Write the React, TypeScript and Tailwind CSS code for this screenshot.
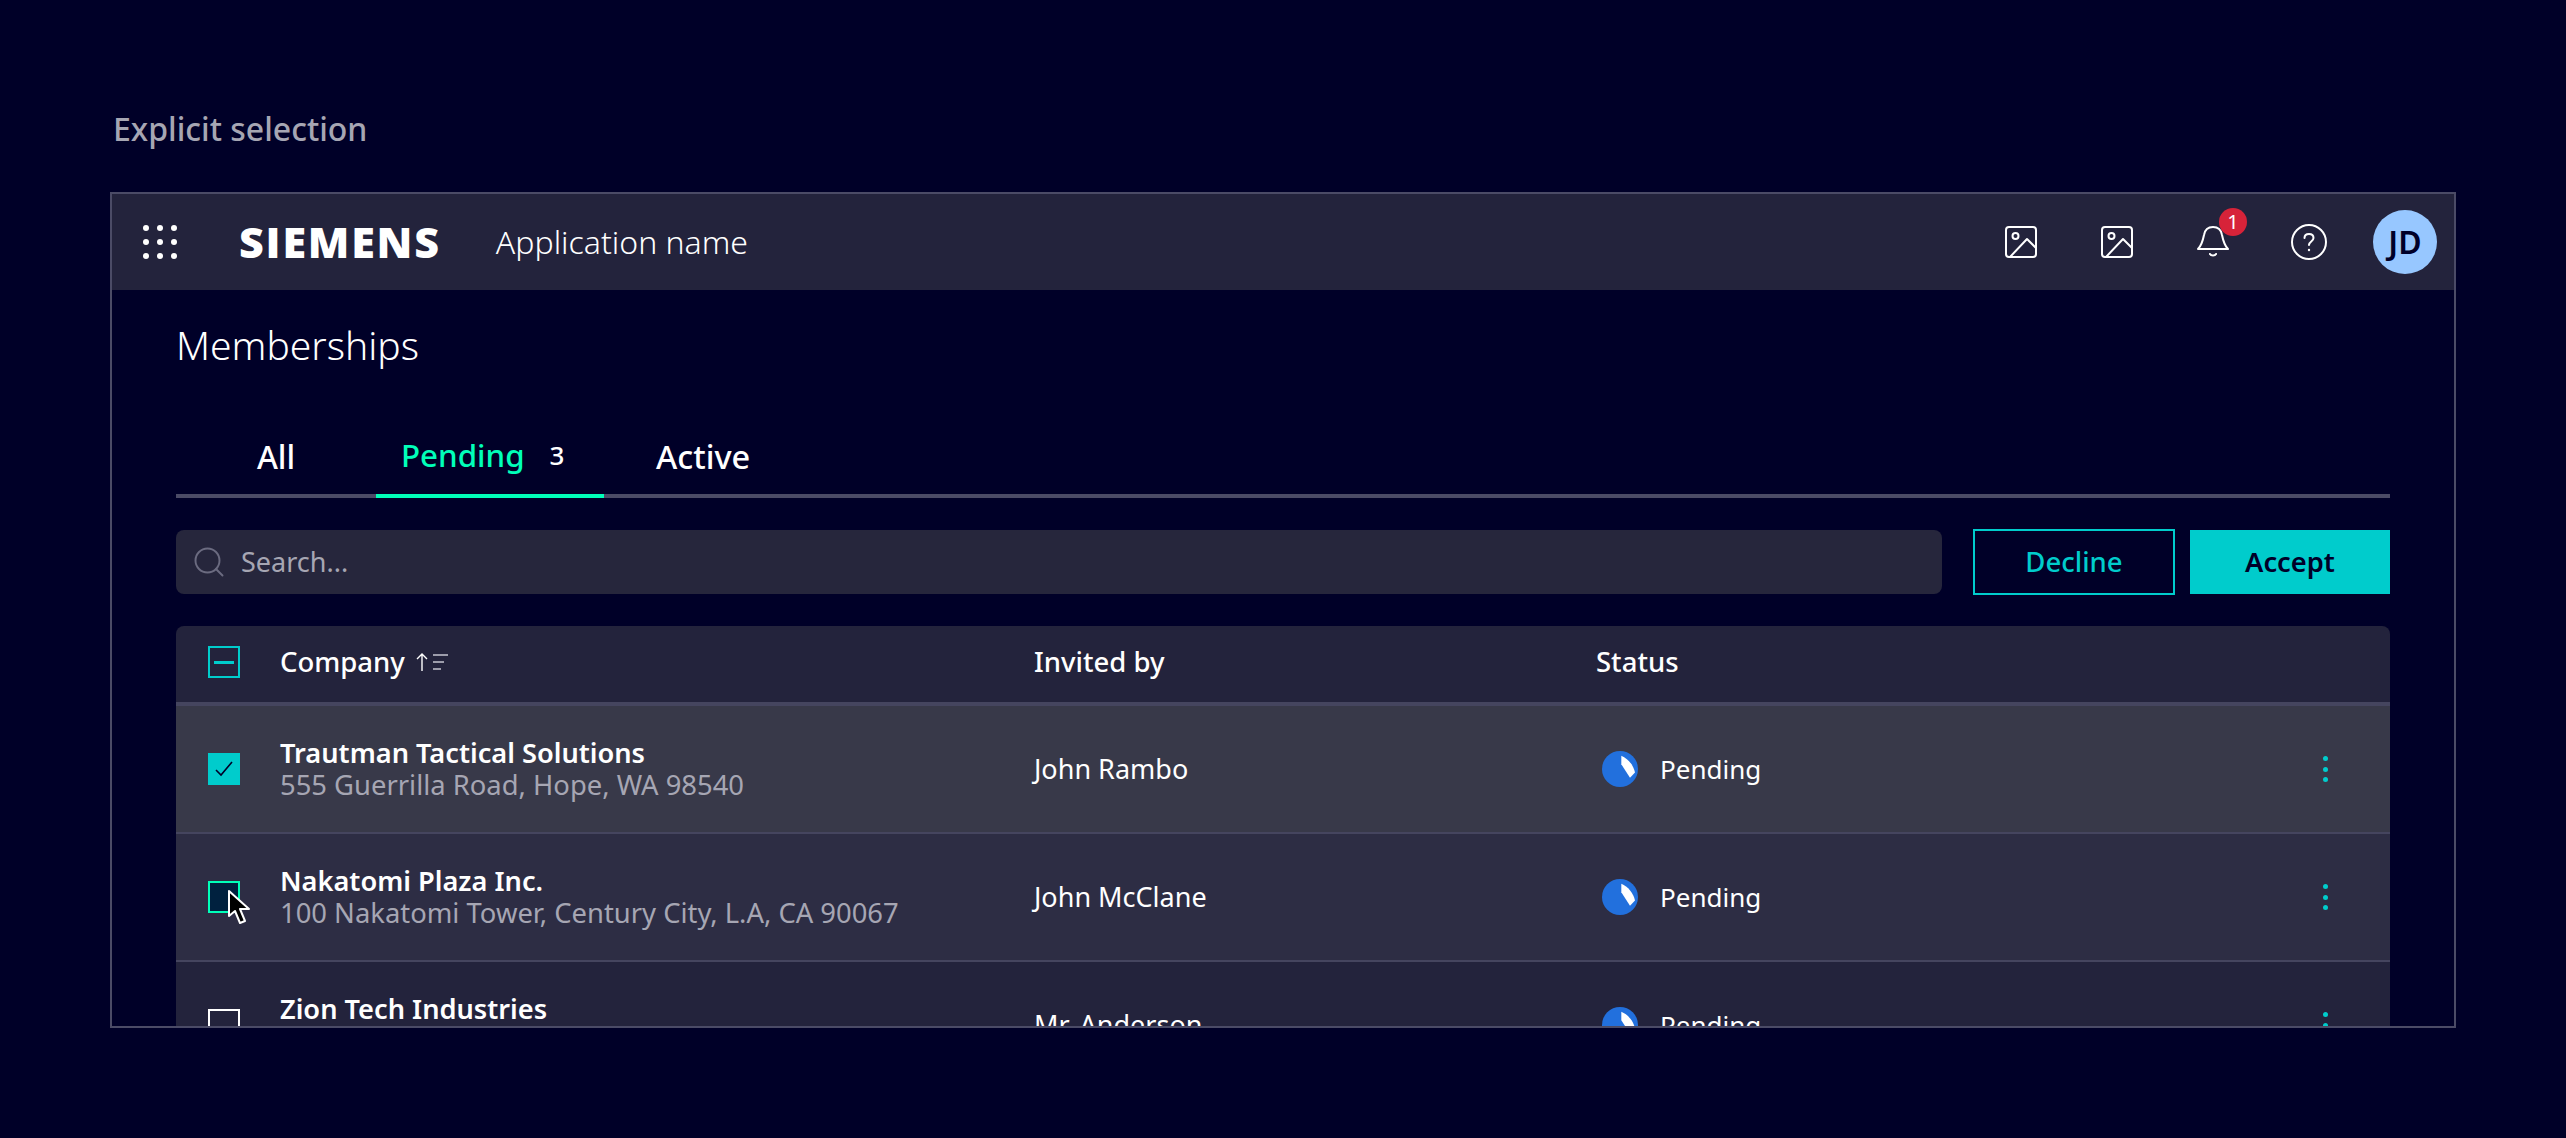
import { Search } from 'lucide-react'

const font = "font-['Noto_Sans','Open_Sans',sans-serif]"

const ImageIcon = () => (
  <svg width="32" height="32" viewBox="0 0 32 32" fill="none" stroke="#fff" strokeWidth="2" strokeLinejoin="round">
    <rect x="1" y="1" width="30" height="30" rx="3" />
    <circle cx="10.5" cy="10" r="3" />
    <path d="M5 31 L22 13 L31 22" />
  </svg>
)

const Bell = () => (
  <svg width="32" height="34" viewBox="0 0 32 34" fill="none" stroke="#fff" strokeWidth="2" strokeLinejoin="round" strokeLinecap="round">
    <path d="M1 24 C5 20 6 15 7 10 C8 4 12 2 16 2 C20 2 24 4 25 10 C26 15 27 20 31 24 Z" />
    <path d="M13 29 C14 31 18 31 19 29" />
  </svg>
)

const Help = () => (
  <svg width="36" height="36" viewBox="0 0 36 36" fill="none" stroke="#fff" strokeWidth="2" strokeLinecap="round">
    <circle cx="18" cy="18" r="17" />
    <path d="M13.5 14 C13.5 11 15.5 10 18 10 C20.5 10 22.5 11.5 22.5 14 C22.5 17.5 18 17.5 18 21" />
    <circle cx="18" cy="26" r="1.2" fill="#fff" stroke="none" />
  </svg>
)

const Pending = () => (
  <svg width="36" height="36" viewBox="0 0 36 36">
    <circle cx="18" cy="18" r="18" fill="#2270dd" />
    <path d="M19.3 4.7 C26 7.5 31.5 14 33 21.5 L28 26.7 L19.3 13.3 Z" fill="#fff" />
  </svg>
)

const Kebab = () => (
  <div className="flex flex-col gap-[5.5px]">
    <span className="w-[5px] h-[5px] rounded-full bg-[#00cccc]" />
    <span className="w-[5px] h-[5px] rounded-full bg-[#00cccc]" />
    <span className="w-[5px] h-[5px] rounded-full bg-[#00cccc]" />
  </div>
)

const Cursor = () => (
  <svg className="absolute left-[17px] top-[6px]" width="26" height="38" viewBox="0 0 26 38">
    <path d="M2 2 L2 27 L8 22 L13 34 L18 32 L13 20 L22 20 Z" fill="#000" stroke="#fff" strokeWidth="2" strokeLinejoin="round" />
  </svg>
)

const rows = [
  { name: 'Trautman Tactical Solutions', addr: '555 Guerrilla Road, Hope, WA 98540', by: 'John Rambo', bg: 'bg-[#383949]', check: 'on' },
  { name: 'Nakatomi Plaza Inc.', addr: '100 Nakatomi Tower, Century City, L.A, CA 90067', by: 'John McClane', bg: 'bg-[#2d2d44]', check: 'hover' },
  { name: 'Zion Tech Industries', addr: '', by: 'Mr. Anderson', bg: 'bg-[#23233c]', check: 'off' },
]

const Row = ({ name, addr, by, bg, check }: { name: string; addr: string; by: string; bg: string; check: string }) => (
  <div className={`flex items-center h-[128px] shrink-0 border-b-2 border-[#45455f] ${bg}`}>
    <div className="w-[104px] pl-8 shrink-0 relative">
      {check === 'on' && (
        <div className="w-8 h-8 bg-[#00cccc] flex items-center justify-center">
          <svg width="20" height="20" viewBox="0 0 20 20" fill="none" stroke="#000028" strokeWidth="1.6">
            <path d="M2 11 L7 16 L18 3" />
          </svg>
        </div>
      )}
      {check === 'hover' && (
        <div className="relative w-8 h-8 border-2 border-[#00ffb9] bg-[#00213f]">
          <Cursor />
        </div>
      )}
      {check === 'off' && <div className="w-8 h-8 border-2 border-white" />}
    </div>
    <div className="w-[754px] shrink-0 flex flex-col">
      <span className="text-[27.2px] leading-[32px] font-semibold text-white">{name}</span>
      <span className="text-[27.4px] leading-[32px] h-[32px] text-[#a6a6b3]">{addr}</span>
    </div>
    <div className="w-[562px] shrink-0 text-[27px] text-white">{by}</div>
    <div className="flex items-center gap-[22px] pl-[6px] flex-1">
      <Pending />
      <span className="text-[26px] text-white">Pending</span>
    </div>
    <div className="pr-[62px]">
      <Kebab />
    </div>
  </div>
)

export default function App() {
  return (
    <div className={`w-[2566px] h-[1138px] bg-[#000028] overflow-hidden pt-[110px] px-[110px] ${font}`}>
      <div className="text-[32px] leading-[38px] font-medium text-[#a6a6b3] h-[82px] ml-[3px]">Explicit selection</div>
      <div className="w-[2346px] h-[836px] border-2 border-[#4b4b66] flex flex-col overflow-hidden">
        <header className="h-[96px] shrink-0 bg-[#23233c] flex items-center">
          <div className="grid grid-cols-3 gap-[8px] ml-[31px] w-[34px] shrink-0">
            {Array.from({ length: 9 }).map((_, i) => (
              <span key={i} className="w-[6px] h-[6px] rounded-full bg-white" />
            ))}
          </div>
          <span className="ml-[62px] text-[43px] font-extrabold text-white tracking-[1.8px] font-['Open_Sans',sans-serif]">SIEMENS</span>
          <span className="ml-[55px] text-[32px] font-light text-white">Application name</span>
          <div className="ml-auto flex items-center mr-[1px]">
            <div className="w-[96px] flex justify-center"><ImageIcon /></div>
            <div className="w-[96px] flex justify-center"><ImageIcon /></div>
            <div className="w-[96px] flex justify-center relative">
              <Bell />
              <span className="absolute left-[54px] -top-[17px] w-7 h-7 rounded-full bg-[#d72339] text-white text-[20px] leading-7 text-center">1</span>
            </div>
            <div className="w-[96px] flex justify-center"><Help /></div>
            <div className="w-[96px] flex justify-center">
              <div className="w-[64px] h-[64px] rounded-full bg-[#97c7ff] text-[#000028] text-[32px] font-semibold flex items-center justify-center">JD</div>
            </div>
          </div>
        </header>
        <main className="flex-1 px-[64px] min-h-0 flex flex-col">
          <h1 className="text-[39px] font-light text-white leading-[48px] mt-[31px]">Memberships</h1>
          <nav className="flex items-end h-[76px] mt-[53px] border-b-4 border-[#4b4b66] shrink-0">
            <div className="w-[200px] text-center text-[32px] leading-[44px] font-medium text-white pb-[15px]">All</div>
            <div className="w-[228px] -mb-1 border-b-4 border-[#00ffb9] flex pl-[25px] gap-[25px] items-baseline pb-[15px] leading-[44px]">
              <span className="text-[31.3px] font-medium text-[#00ffb9]">Pending</span>
              <span className="text-[26px] font-medium text-white -translate-y-[2px]">3</span>
            </div>
            <div className="ml-[52px] text-[32.5px] leading-[44px] font-medium text-white pb-[15px]">Active</div>
          </nav>
          <div className="flex mt-[32px] h-[64px] shrink-0">
            <div className="flex-1 bg-[#26263c] rounded-[8px] flex items-center pl-[15px] gap-[14px]">
              <Search size={36} strokeWidth={1.3} className="text-[#6b6b80]" />
              <span className="text-[27px] text-[#a6a6b3]">Search...</span>
            </div>
            <div className="w-[202px] h-[66px] -my-px ml-[31px] border-2 border-[#00cccc] flex items-center justify-center text-[27.5px] font-medium text-[#00cccc]">Decline</div>
            <div className="w-[200px] ml-[15px] bg-[#00cccc] flex items-center justify-center text-[27.3px] font-semibold text-[#000028]">Accept</div>
          </div>
          <div className="mt-[32px] rounded-t-[8px] overflow-hidden flex flex-col flex-1 min-h-0">
            <div className="flex items-center h-[80px] pb-[4px] shrink-0 bg-[#23233c] border-b-4 border-[#45455f]">
              <div className="w-[104px] pl-8 shrink-0">
                <div className="w-8 h-8 border-2 border-[#00cccc] flex items-center justify-center">
                  <span className="w-5 h-[3px] bg-[#00cccc]" />
                </div>
              </div>
              <div className="w-[754px] shrink-0 flex items-center gap-[10px]">
                <span className="text-[27.5px] font-medium text-white">Company</span>
                <svg width="34" height="20" viewBox="0 0 34 20" fill="none" stroke="#fff" strokeWidth="1.4">
                  <path d="M7 19 V2 M2 7 L7 2 L12 7" />
                  <path d="M18 3 H33 M18 10 H29 M18 17 H26" stroke="#c5c5d0" />
                </svg>
              </div>
              <div className="w-[562px] shrink-0 text-[27.5px] font-medium text-white">Invited by</div>
              <div className="text-[27.5px] font-medium text-white">Status</div>
            </div>
            {rows.map((r) => (
              <Row key={r.name} {...r} />
            ))}
          </div>
        </main>
      </div>
    </div>
  )
}
